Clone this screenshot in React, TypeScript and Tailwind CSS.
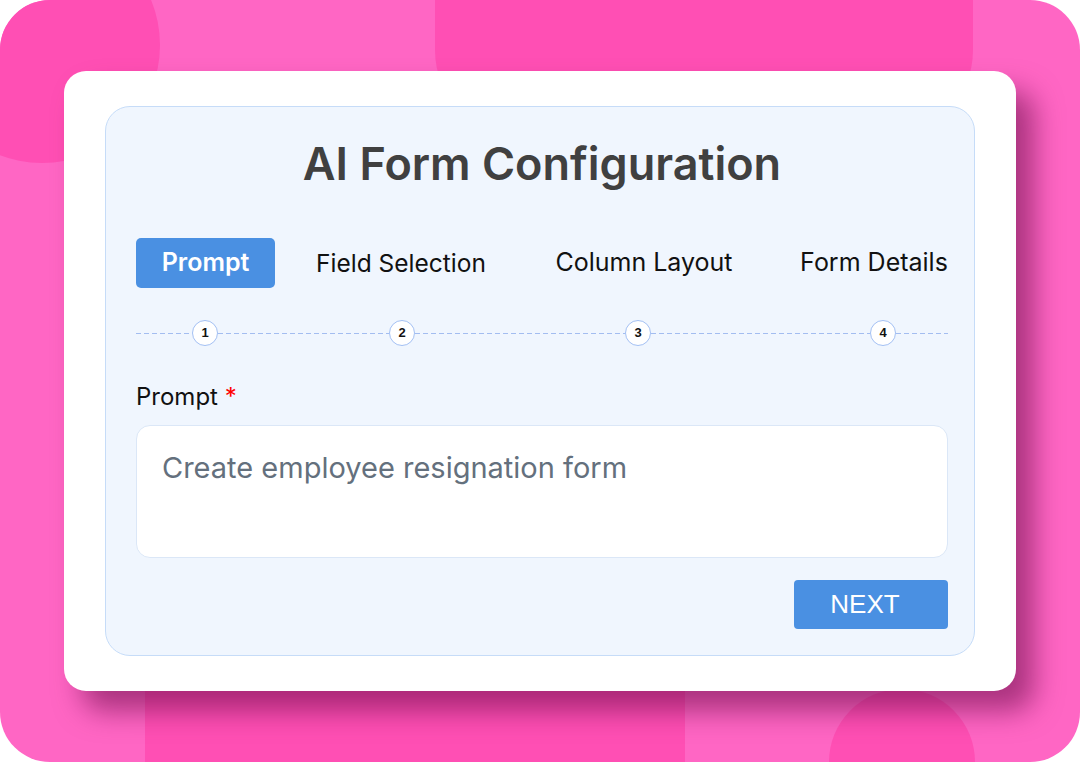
const steps = ['Prompt', 'Field Selection', 'Column Layout', 'Form Details'];

const App = () => {
  return (
    <div className="w-[1080px] h-[762px] bg-white font-['Inter','Liberation_Sans',sans-serif]">
      <div className="relative w-full h-full overflow-hidden rounded-[50px] bg-[#ff66c4]">
        {/* background blobs */}
        <div className="absolute left-[-76px] top-[-73px] w-[236px] h-[236px] rounded-full bg-[#ff4fb4]" />
        <div className="absolute left-[435px] top-[-120px] w-[538px] h-[260px] rounded-[90px] bg-[#ff4fb4]" />
        <div className="absolute left-[145px] top-[600px] w-[540px] h-[260px] rounded-[90px] bg-[#ff4fb4]" />
        <div className="absolute left-[829px] top-[689px] w-[146px] h-[146px] rounded-full bg-[#ff4fb4]" />

        {/* card */}
        <div className="relative ml-[64px] mt-[71px] w-[952px] h-[620px] rounded-[22px] bg-white p-[35px_41px] shadow-[18px_20px_28px_rgba(100,10,70,0.55)]">
          <div className="h-[550px] rounded-[25px] border border-[#c6dcf8] bg-[#f0f6fe] pl-[30px] pr-[26px] pt-[31px]">
            <h1 className="h-[52px] text-center text-[45px] leading-[52px] font-semibold text-[#404040]">
              AI Form Configuration
            </h1>

            {/* tabs */}
            <div className="mt-[48px] flex items-center h-[50px]">
              <button className="shrink-0 w-[139px] h-[50px] rounded-[5px] bg-[#4a90e2] text-white text-[25px] font-semibold">
                Prompt
              </button>
              <div className="shrink-0 ml-[26px] w-[200px] text-center text-[24.5px] text-[#111]">{steps[1]}</div>
              <div className="shrink-0 ml-[43px] w-[200px] text-center text-[25px] text-[#111]">{steps[2]}</div>
              <div className="shrink-0 ml-[56px] w-[148px] text-center text-[25px] text-[#111] whitespace-nowrap">{steps[3]}</div>
            </div>

            {/* stepper */}
            <div className="mt-[32px] flex items-center h-[26px]">
              {[56, 171, 210, 219].map((w, i) => (
                <div key={i} className="flex items-center">
                  <div
                    className="h-px bg-[repeating-linear-gradient(to_right,#a3bdf0_0_5px,transparent_5px_8px)]"
                    style={{ width: w }}
                  />
                  <div className="w-[26px] h-[26px] rounded-full border border-[#a3c0f4] bg-white flex items-center justify-center text-[13px] font-bold text-[#111] font-['Liberation_Sans',sans-serif]">
                    {i + 1}
                  </div>
                </div>
              ))}
              <div className="w-[52px] h-px bg-[repeating-linear-gradient(to_right,#a3bdf0_0_5px,transparent_5px_8px)]" />
            </div>

            {/* prompt field */}
            <label className="mt-[36px] block h-[30px] leading-[30px] text-[24px] text-[#111]">
              Prompt <span className="text-[#ff0000]">*</span>
            </label>
            <textarea
              className="mt-[13px] block w-full h-[133px] resize-none rounded-[14px] border border-[#dbe7f7] bg-white px-[25px] pt-[23px] text-[29px] leading-[38px] text-[#111] outline-none placeholder:text-[#64707d]"
              placeholder="Create employee resignation form"
            />

            <div className="mt-[22px] flex justify-end">
              <button className="w-[154px] h-[49px] rounded-[4px] bg-[#4a90e2] pr-[12px] text-white text-[26px] font-['Liberation_Sans',sans-serif]">
                NEXT
              </button>
            </div>
          </div>
        </div>
      </div>
    </div>
  );
};

export default App;
